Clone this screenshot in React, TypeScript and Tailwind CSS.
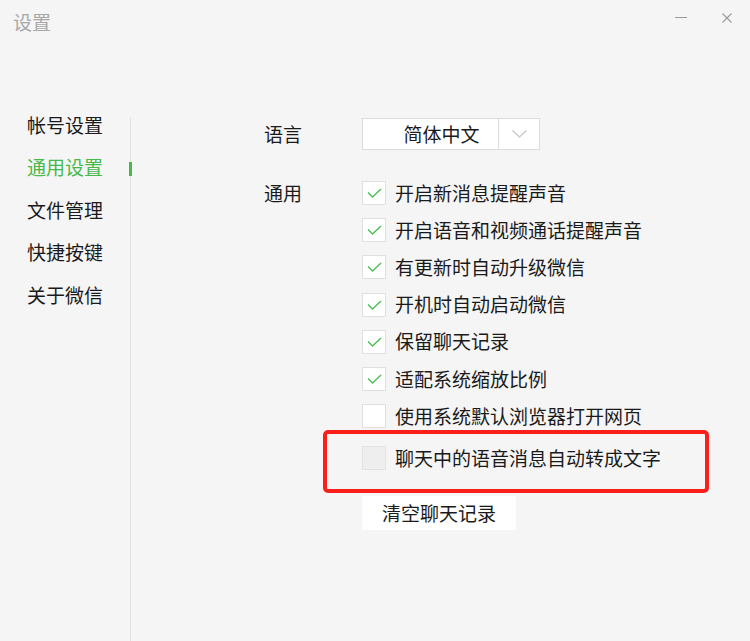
import { ReactNode } from 'react'

const font = { fontFamily: '"Noto Sans CJK SC", "Microsoft YaHei", sans-serif' }

function Check() {
  return (
    <svg width="15" height="10" viewBox="0 0 15 10" fill="none">
      <path d="M1 4.5 L5.5 9 L14 1" stroke="#4cbd55" strokeWidth="1.4" />
    </svg>
  )
}

function Option({ checked, disabled, children }: { checked?: boolean; disabled?: boolean; children: ReactNode }) {
  return (
    <div className="flex h-[37.2px] items-center">
      <div
        className={
          disabled
            ? 'flex h-[24px] w-[24px] items-center justify-center border border-[#e2e2e2] bg-[#eeeeee]'
            : 'flex h-[24px] w-[24px] items-center justify-center border border-[#e0e0e0] bg-white'
        }
      >
        {checked ? <Check /> : null}
      </div>
      <span className="ml-[9px] pb-[2px] text-[19px] leading-none text-[#1a1a1a]">{children}</span>
    </div>
  )
}

const menu = ['帐号设置', '通用设置', '文件管理', '快捷按键', '关于微信']

export default function App() {
  return (
    <div className="relative flex h-[641px] w-[750px] flex-col overflow-hidden bg-[#f5f5f5]" style={font}>
      <div className="relative h-[103px] shrink-0">
        <div className="pl-[13px] pt-[12px] text-[19px] leading-[20px] text-[#a8a8a8]">设置</div>
        <div className="absolute left-[675px] top-[17px] h-px w-[12px] bg-[#9a9a9a]" />
        <svg className="absolute left-[722px] top-[13px]" width="10" height="10" viewBox="0 0 10 10">
          <path d="M0.5 0.5 L9.5 9.5 M9.5 0.5 L0.5 9.5" stroke="#9a9a9a" strokeWidth="1.1" />
        </svg>
      </div>

      <div className="flex flex-1">
        <div className="w-[130px] shrink-0">
          {menu.map((m, i) => (
            <div key={m} className="relative flex h-[42.5px] items-center pl-[27px]">
              <span className={i === 1 ? 'text-[19px] leading-none text-[#45b94a]' : 'text-[19px] leading-none text-[#1a1a1a]'}>
                {m}
              </span>
              {i === 1 ? <div className="absolute right-[-2px] top-[16px] z-10 h-[14px] w-[3px] bg-[#45b94a]" /> : null}
            </div>
          ))}
        </div>

        <div className="mt-[14px] flex-1 border-l border-[#e2e2e2] pl-[133px] pt-px">
          <div className="flex h-[32px] items-center">
            <span className="w-[98px] pb-[2px] text-[19px] leading-none text-[#1a1a1a]">语言</span>
            <div className="flex h-[32px] w-[178px] border border-[#dcdcdc] bg-white">
              <div className="flex flex-1 items-center justify-center border-r border-[#dcdcdc] pb-[2px] pl-[22px] text-[19px] leading-none text-[#1a1a1a]">
                简体中文
              </div>
              <div className="flex w-[40px] items-center justify-center">
                <svg width="15" height="8" viewBox="0 0 15 8" fill="none">
                  <path d="M0.5 0.5 L7.5 7 L14.5 0.5" stroke="#c4c4c4" strokeWidth="1.1" />
                </svg>
              </div>
            </div>
          </div>

          <div className="mt-[24.5px] flex">
            <div className="flex h-[37.2px] w-[98px] items-center pb-[2px] text-[19px] leading-none text-[#1a1a1a]">通用</div>
            <div className="flex flex-col">
              <Option checked>开启新消息提醒声音</Option>
              <Option checked>开启语音和视频通话提醒声音</Option>
              <Option checked>有更新时自动升级微信</Option>
              <Option checked>开机时自动启动微信</Option>
              <Option checked>保留聊天记录</Option>
              <Option checked>适配系统缩放比例</Option>
              <Option>使用系统默认浏览器打开网页</Option>
              <div className="mt-[5px]">
                <Option disabled>聊天中的语音消息自动转成文字</Option>
              </div>
              <div className="mt-[19px] flex">
                <div className="flex h-[34px] items-center bg-white px-[20px] pb-[2px] text-[19px] leading-none text-[#1a1a1a]">
                  清空聊天记录
                </div>
              </div>
            </div>
          </div>
        </div>
      </div>

      <div className="absolute left-[323px] top-[430px] h-[63px] w-[386px] rounded-[5px] border-[4px] border-[#fa1f1a]" />
    </div>
  )
}
